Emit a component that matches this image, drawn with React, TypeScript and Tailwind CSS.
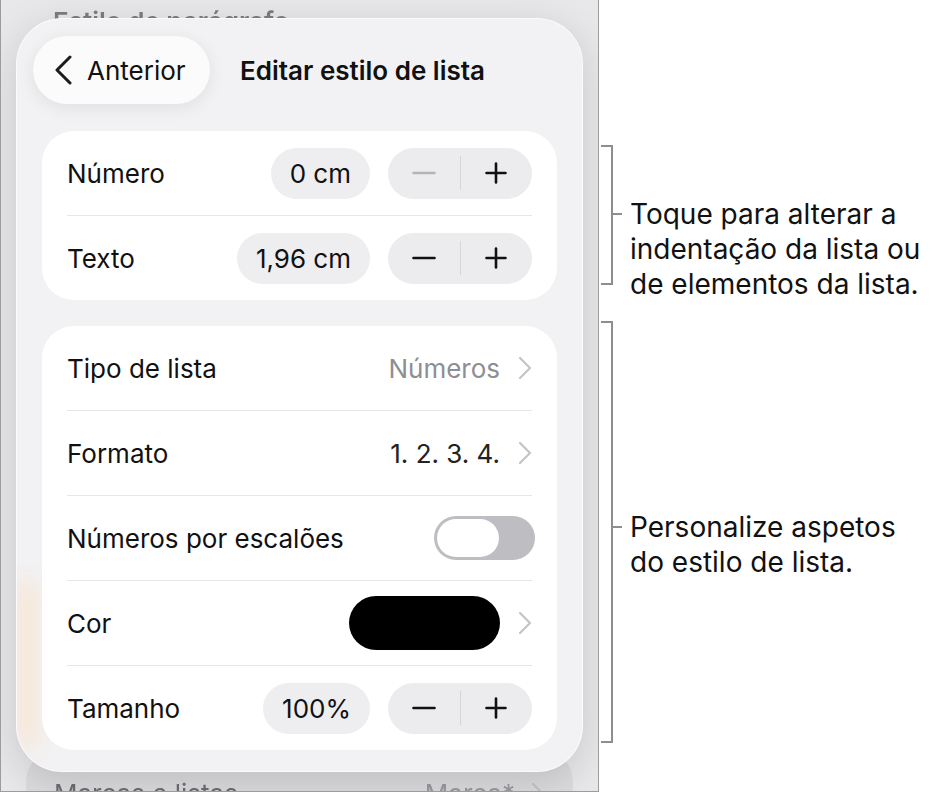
import type { ReactNode } from 'react'

const ui = { fontFamily: 'Inter, "Noto Sans", sans-serif' }

function ChevronRight() {
  return (
    <svg width="14" height="24" viewBox="0 0 14 24" fill="none" className="shrink-0">
      <path d="M2 2l10 10-10 10" stroke="#c4c4c7" strokeWidth="2.2" strokeLinecap="round" strokeLinejoin="round" />
    </svg>
  )
}

function Stepper({ minusDisabled = false }: { minusDisabled?: boolean }) {
  return (
    <div className="flex h-[51px] w-[144px] items-center rounded-full bg-[#ececee]">
      <div className="flex flex-1 items-center justify-center">
        <svg width="24" height="24" viewBox="0 0 24 24" fill="none">
          <path d="M1.5 12h21" stroke={minusDisabled ? '#b4b4b8' : '#111'} strokeWidth="2.6" strokeLinecap="round" />
        </svg>
      </div>
      <div className="h-[34px] w-px bg-[#d6d6d9]" />
      <div className="flex flex-1 items-center justify-center">
        <svg width="22" height="22" viewBox="0 0 22 22" fill="none">
          <path d="M11 1.5v19M1.5 11h19" stroke="#111" strokeWidth="2.6" strokeLinecap="round" />
        </svg>
      </div>
    </div>
  )
}

function ValuePill({ children }: { children: ReactNode }) {
  return (
    <div className="flex h-[51px] items-center rounded-full bg-[#eeeef0] px-[19px] text-[26px] text-[#111]">
      {children}
    </div>
  )
}

function Row({ label, children }: { label: string; children?: ReactNode }) {
  return (
    <div className="box-content flex h-[84px] items-center justify-between">
      <span className="text-[26px] text-[#111]">{label}</span>
      <div className="flex items-center gap-[18px]">{children}</div>
    </div>
  )
}

function Toggle() {
  return (
    <div className="-mr-[3px] flex h-[44px] w-[101px] items-center rounded-full bg-[#bdbdc2] p-[3px]">
      <div className="h-[38px] w-[62px] rounded-full bg-white" />
    </div>
  )
}

function Bracket({ height, textTop, lines }: { height: number; textTop: number; lines: string[] }) {
  return (
    <div className="flex items-start" style={{ height }}>
      <div className="w-[12px] border-y-2 border-r-2 border-[#8e8e8e]" style={{ height }} />
      <div className="flex items-start" style={{ paddingTop: textTop }}>
        <div className="mt-[16px] h-[2px] w-[9px] bg-[#8e8e8e]" />
        <p className="ml-[8px] text-[28px] leading-[35px] text-[#111]" style={ui}>
          {lines.map((l) => (
            <span key={l} className="block whitespace-nowrap">
              {l}
            </span>
          ))}
        </p>
      </div>
    </div>
  )
}

export default function App() {
  return (
    <div className="flex h-[793px] w-[936px] bg-white" style={ui}>
      {/* device area */}
      <div className="relative h-[792px] w-[599px] shrink-0 overflow-hidden border-x border-b border-[#9c9c9c] bg-[#e8e8ea]">
        {/* dimmed sheet behind the popover */}
        <div className="flex h-full flex-col">
          <div className="px-[52px] pt-[2px] text-[26px] font-semibold text-[#7d7d80] blur-[0.6px]">
            Estilo de parágrafo
          </div>
          <div className="flex-1" />
          <div className="mx-[25px] h-[40px] overflow-hidden rounded-t-[30px] bg-[#dcdcde]">
            <div className="flex items-center justify-between px-[28px] pt-[28px] text-[26px] leading-[30px] blur-[0.5px]">
              <span className="text-[#6e6e72]">Marcas e listas</span>
              <span className="flex items-center gap-[16px] text-[#9a9a9e]">
                Marca*
                <ChevronRight />
              </span>
            </div>
          </div>
        </div>

        {/* popover */}
        <div className="absolute left-[15px] top-[18px] h-[754px] w-[567px] overflow-hidden rounded-[46px] border border-white/70 bg-[#f2f2f4] shadow-[0_10px_40px_rgba(0,0,0,0.14)]">
          <div className="absolute left-0 top-[560px] h-[170px] w-[18px] rounded-full bg-[#ffd8b0] opacity-60 blur-md" />

          <div className="relative flex flex-col px-[15px] pt-[17px]">
            <div className="flex items-center">
              <div className="ml-px flex h-[68px] w-[177px] items-center rounded-full bg-[#fbfbfb] pl-[21px] shadow-[0_4px_18px_rgba(0,0,0,0.08)]">
                <svg width="19" height="30" viewBox="0 0 19 30" fill="none">
                  <path d="M16 2L3 15l13 13" stroke="#1c1c1e" strokeWidth="3" strokeLinecap="round" strokeLinejoin="round" />
                </svg>
                <span className="ml-[14px] text-[26px] text-[#111]">Anterior</span>
              </div>
              <span className="ml-[30px] text-[26px] font-semibold text-[#111]">Editar estilo de lista</span>
            </div>

            <div className="mx-[10px] mt-[27px] flex flex-col divide-y divide-[#e6e6ea] rounded-[32px] bg-white px-[25px]">
              <Row label="Número">
                <ValuePill>0 cm</ValuePill>
                <Stepper minusDisabled />
              </Row>
              <Row label="Texto">
                <ValuePill>1,96 cm</ValuePill>
                <Stepper />
              </Row>
            </div>

            <div className="mx-[10px] mt-[26px] flex flex-col divide-y divide-[#e6e6ea] rounded-[32px] bg-white px-[25px]">
              <Row label="Tipo de lista">
                <span className="text-[26px] text-[#8e8e93]">Números</span>
                <ChevronRight />
              </Row>
              <Row label="Formato">
                <span className="text-[26px] text-[#222]">1. 2. 3. 4.</span>
                <ChevronRight />
              </Row>
              <Row label="Números por escalões">
                <Toggle />
              </Row>
              <Row label="Cor">
                <div className="h-[54px] w-[151px] rounded-full bg-black" />
                <ChevronRight />
              </Row>
              <Row label="Tamanho">
                <ValuePill>100%</ValuePill>
                <Stepper />
              </Row>
            </div>
          </div>
        </div>
      </div>

      {/* callouts */}
      <div className="flex flex-col pl-[2px] pt-[145px]">
        <Bracket height={140} textTop={52} lines={['Toque para alterar a', 'indentação da lista ou', 'de elementos da lista.']} />
        <div className="h-[36px]" />
        <Bracket height={422} textTop={189} lines={['Personalize aspetos', 'do estilo de lista.']} />
      </div>
    </div>
  )
}
